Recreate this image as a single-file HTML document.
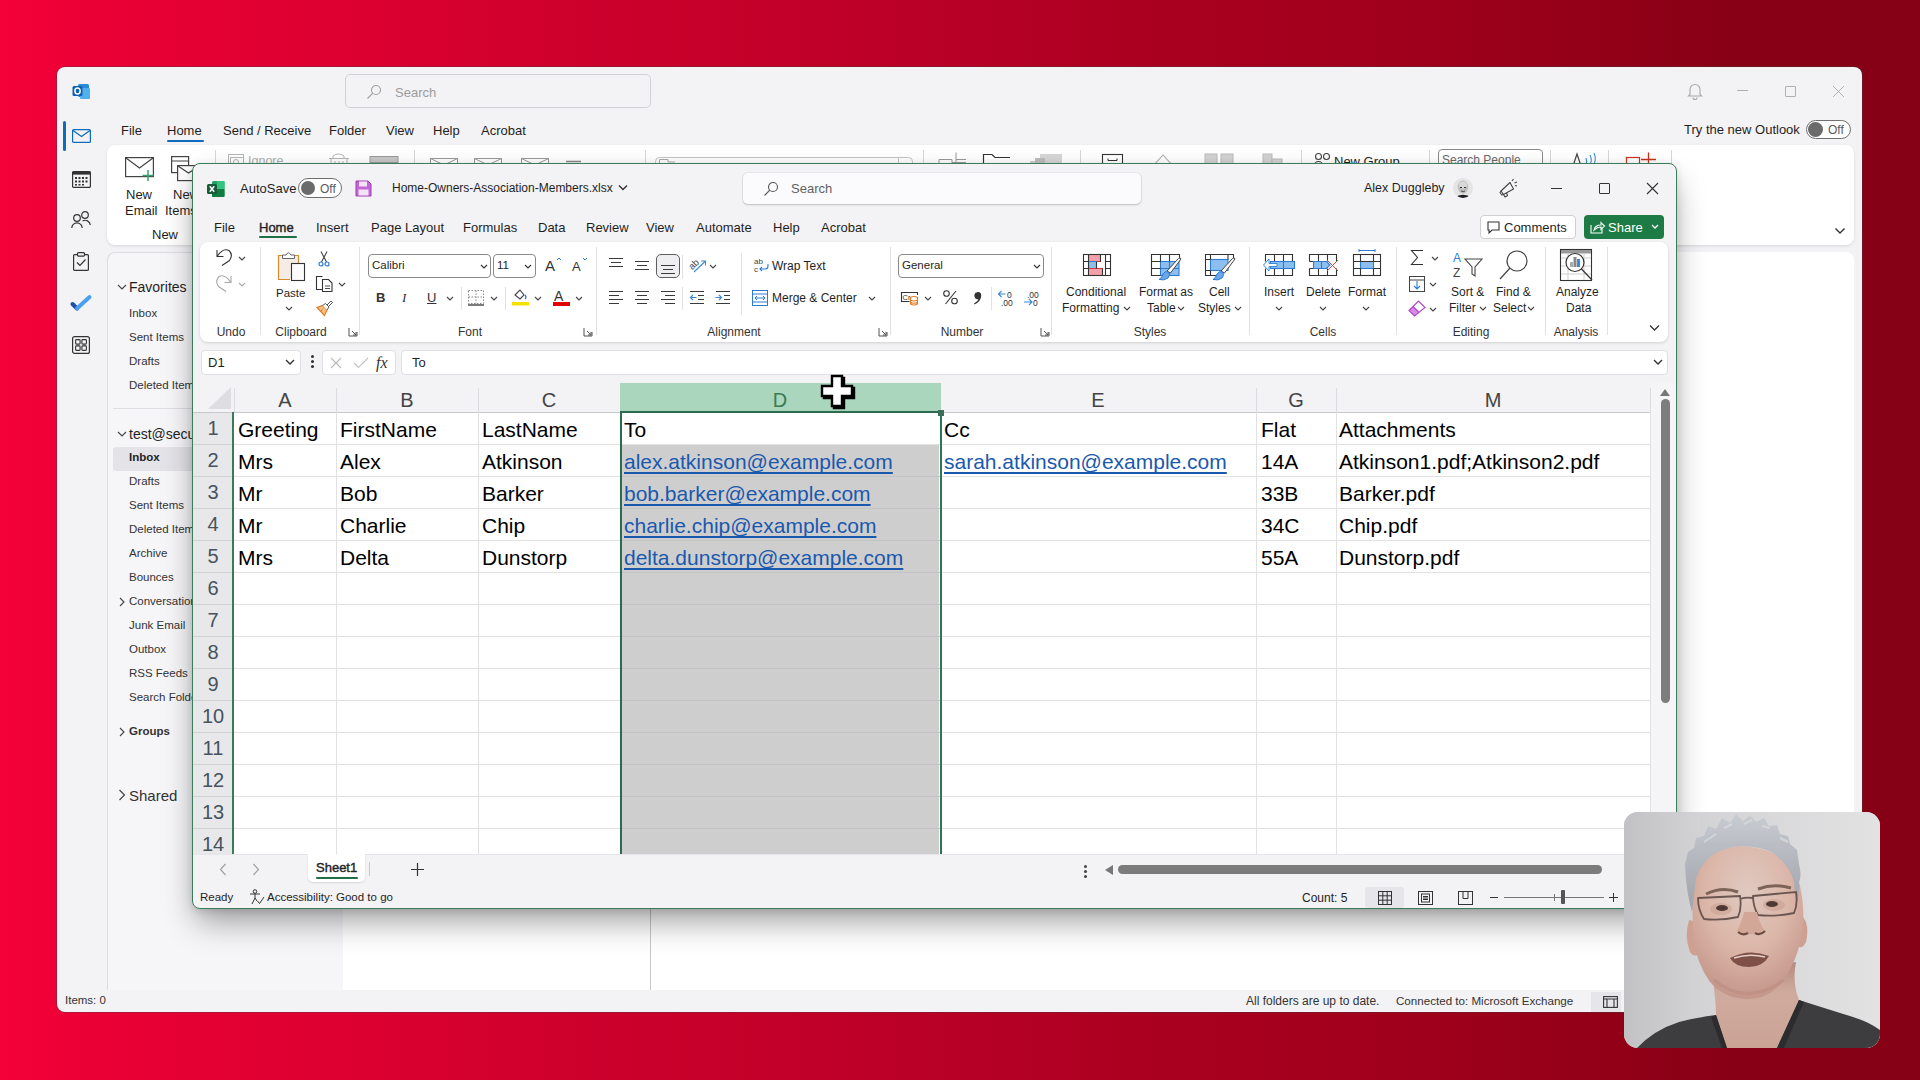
<!DOCTYPE html>
<html><head><meta charset="utf-8">
<style>
*{margin:0;padding:0;box-sizing:border-box}
html,body{width:1920px;height:1080px;overflow:hidden}
body{position:relative;font-family:"Liberation Sans",sans-serif;color:#1f1f1f;
background:linear-gradient(90deg,#f5003a 0%,#ea0035 5%,#dc0030 18.5%,#cc002c 31%,#c20029 41%,#b80027 49.5%,#a9001f 61%,#a0001b 73.5%,#960018 81%,#880016 90%,#860016 100%)}
.a{position:absolute}
.t{position:absolute;white-space:nowrap;line-height:1}
svg{position:absolute;overflow:visible}
/* outlook */
#ol{left:57px;top:67px;width:1805px;height:945px;background:#f3f2f5;border-radius:8px;overflow:hidden;box-shadow:0 0 0 1px rgba(60,60,60,.35)}
.f12{font-size:12px}
.f13{font-size:13px}
/* excel */
#xl{left:192px;top:163px;width:1485px;height:746px;background:#f3f2f5;border:1px solid #3a7d5c;border-radius:8px;overflow:hidden;box-shadow:0 16px 32px -4px rgba(0,0,0,.38),0 2px 8px rgba(0,0,0,.12)}
.cell{position:absolute;font-size:21px;line-height:1;white-space:nowrap;color:#000}
.lnk{color:#1a59ad;text-decoration:underline;text-decoration-thickness:2px;text-underline-offset:3px;text-decoration-skip-ink:none}
.rh{position:absolute;left:0;width:41px;text-align:center;font-size:20px;line-height:1;color:#4a5a66}
.ch{position:absolute;top:0;font-size:20px;line-height:1;color:#444}
</style></head><body>

<!-- ================= OUTLOOK ================= -->
<div id="ol" class="a">
<!-- title bar -->
<svg style="left:15px;top:15px" width="18" height="18" viewBox="0 0 18 18">
 <rect x="6" y="2" width="11" height="13" rx="1.5" fill="#2a8ad4"/>
 <rect x="8" y="6" width="10" height="11" rx="1" fill="#50b0ec"/>
 <rect x="0.5" y="4" width="10" height="10" rx="1.5" fill="#0f5fb5"/>
 <ellipse cx="5.5" cy="9" rx="2.6" ry="3" fill="none" stroke="#fff" stroke-width="1.5"/>
</svg>
<div class="a" style="left:288px;top:7px;width:306px;height:34px;background:#f3f2f5;border:1px solid #d2d1d6;border-radius:5px"></div>
<svg style="left:309px;top:17px" width="16" height="16" viewBox="0 0 16 16"><circle cx="10" cy="6" r="4.5" fill="none" stroke="#a0a0a0" stroke-width="1.1"/><path d="M6.8 9.2 L1.5 14.5" stroke="#a0a0a0" stroke-width="1.1"/></svg>
<div class="t f13" style="left:338px;top:19px;color:#9c9c9c">Search</div>
<svg style="left:1630px;top:15px" width="16" height="18" viewBox="0 0 16 18"><path d="M3 12.5 V7.5 a5 5 0 0 1 10 0 V12.5 L14.5 14 H1.5 Z" fill="none" stroke="#a8a8a8" stroke-width="1.1"/><path d="M6 15.5 a2 2 0 0 0 4 0" fill="none" stroke="#a8a8a8" stroke-width="1.1"/></svg>
<div class="a" style="left:1680px;top:23px;width:11px;height:1px;background:#b0b0b0"></div>
<div class="a" style="left:1728px;top:19px;width:11px;height:11px;border:1px solid #b0b0b0;border-radius:1px"></div>
<svg style="left:1776px;top:19px" width="11" height="11" viewBox="0 0 11 11"><path d="M0 0 L11 11 M11 0 L0 11" stroke="#b0b0b0" stroke-width="1"/></svg>
<!-- tabs -->
<div class="t f13" style="left:64px;top:57px">File</div>
<div class="t f13" style="left:110px;top:57px">Home</div>
<div class="a" style="left:110px;top:73px;width:37px;height:2px;background:#0f6cbd;border-radius:1px"></div>
<div class="t f13" style="left:166px;top:57px">Send / Receive</div>
<div class="t f13" style="left:272px;top:57px">Folder</div>
<div class="t f13" style="left:329px;top:57px">View</div>
<div class="t f13" style="left:376px;top:57px">Help</div>
<div class="t f13" style="left:424px;top:57px">Acrobat</div>
<div class="t f13" style="left:1627px;top:56px">Try the new Outlook</div>
<div class="a" style="left:1749px;top:53px;width:45px;height:19px;border:1px solid #707070;border-radius:10px;background:#fff"></div>
<div class="a" style="left:1751px;top:55px;width:15px;height:15px;border-radius:50%;background:#6b6b6b"></div>
<div class="t f12" style="left:1771px;top:57px;color:#5a5a5a">Off</div>
<!-- rail -->
<div class="a" style="left:6px;top:54px;width:3px;height:30px;background:#0f6cbd;border-radius:2px"></div>
<svg style="left:15px;top:62px" width="19" height="14" viewBox="0 0 19 14"><rect x="0.6" y="0.6" width="17.8" height="12.8" rx="1" fill="none" stroke="#0f6cbd" stroke-width="1.2"/><path d="M1 1.5 L9.5 7.5 L18 1.5" fill="none" stroke="#0f6cbd" stroke-width="1.2"/></svg>
<svg style="left:15px;top:103px" width="19" height="18" viewBox="0 0 19 18"><rect x="0.6" y="1.6" width="17.8" height="15.8" rx="1" fill="none" stroke="#333" stroke-width="1.2"/><rect x="0.6" y="1.6" width="17.8" height="3" fill="#333"/><g fill="#333"><rect x="3" y="7" width="2" height="2"/><rect x="6.5" y="7" width="2" height="2"/><rect x="10" y="7" width="2" height="2"/><rect x="13.5" y="7" width="2" height="2"/><rect x="3" y="10.5" width="2" height="2"/><rect x="6.5" y="10.5" width="2" height="2"/><rect x="10" y="10.5" width="2" height="2"/><rect x="13.5" y="10.5" width="2" height="2"/><rect x="3" y="14" width="2" height="1.5"/><rect x="6.5" y="14" width="2" height="1.5"/><rect x="10" y="14" width="2" height="1.5"/></g></svg>
<svg style="left:14px;top:144px" width="20" height="18" viewBox="0 0 20 18"><circle cx="6" cy="7" r="3.3" fill="none" stroke="#333" stroke-width="1.2"/><path d="M0.8 17 a5.2 5.2 0 0 1 10.4 0" fill="none" stroke="#333" stroke-width="1.2"/><circle cx="14" cy="4" r="3.3" fill="none" stroke="#333" stroke-width="1.2"/><path d="M11.5 10 a5.2 5.2 0 0 1 7.8 4" fill="none" stroke="#333" stroke-width="1.2"/></svg>
<svg style="left:16px;top:185px" width="16" height="19" viewBox="0 0 16 19"><rect x="0.6" y="2.6" width="14.8" height="15.8" rx="1" fill="none" stroke="#333" stroke-width="1.2"/><rect x="4.5" y="0.6" width="7" height="3.5" rx="1" fill="#f3f2f5" stroke="#333" stroke-width="1.2"/><path d="M4 10.5 L7 13.5 L12.5 7.5" fill="none" stroke="#333" stroke-width="1.2"/></svg>
<svg style="left:14px;top:228px" width="20" height="16" viewBox="0 0 20 16"><path d="M1.5 9 L6 13.5" stroke="#1f4fa8" stroke-width="4" stroke-linecap="round"/><path d="M6 13.5 L18.5 2" stroke="#4aa0f0" stroke-width="4" stroke-linecap="round"/></svg>
<svg style="left:15px;top:269px" width="18" height="18" viewBox="0 0 18 18"><rect x="0.6" y="0.6" width="16.8" height="16.8" rx="2" fill="none" stroke="#333" stroke-width="1.2"/><rect x="3.6" y="3.6" width="4.5" height="4.5" rx=".8" fill="none" stroke="#333" stroke-width="1.1"/><rect x="9.9" y="3.6" width="4.5" height="4.5" rx=".8" fill="none" stroke="#333" stroke-width="1.1"/><rect x="3.6" y="9.9" width="4.5" height="4.5" rx=".8" fill="none" stroke="#333" stroke-width="1.1"/><rect x="9.9" y="9.9" width="4.5" height="4.5" rx=".8" fill="none" stroke="#333" stroke-width="1.1"/></svg>
<div class="a" style="left:50px;top:185px;width:260px;height:738px;background:#f6f5f8;border-left:1px solid #dcdbe0;border-top:1px solid #dcdbe0;border-radius:8px 0 0 0"></div>
<!-- ribbon card -->
<div class="a" style="left:50px;top:78px;width:1747px;height:100px;background:#fff;border-radius:8px;box-shadow:0 1px 3px rgba(0,0,0,.12)"></div>
<svg style="left:68px;top:90px" width="32" height="24" viewBox="0 0 32 24"><rect x="0.6" y="0.6" width="27.8" height="19" fill="none" stroke="#444" stroke-width="1.2"/><path d="M1 1 L14.5 11 L28 1" fill="none" stroke="#444" stroke-width="1.2"/><path d="M23 13 V24 M17.5 18.5 H28.5" stroke="#3aa272" stroke-width="1.5"/></svg>
<div class="t f13" style="left:69px;top:121px">New</div>
<div class="t f13" style="left:68px;top:137px">Email</div>
<div class="t f13" style="left:95px;top:161px">New</div>
<svg style="left:114px;top:86px" width="30" height="30" viewBox="0 0 30 30"><rect x="0.6" y="3.6" width="17" height="16" fill="none" stroke="#444" stroke-width="1.2"/><path d="M1 8 H17.5" stroke="#444" stroke-width="1.2"/><rect x="6.6" y="12.6" width="22" height="15" fill="#fff" stroke="#444" stroke-width="1.2"/><path d="M7 13 L17.5 20 L28.5 13" fill="none" stroke="#444" stroke-width="1.2"/></svg>
<div class="t f13" style="left:116px;top:121px">New</div>
<div class="t f13" style="left:108px;top:137px">Items</div>
<!-- partial ribbon icons above excel -->
<svg style="left:0;top:78px" width="1750" height="20" viewBox="57 145 1750 20">
 <g stroke="#d6d6d6" stroke-width="1"><path d="M215.5 150 V165 M414.5 150 V165 M645.5 150 V165 M923.5 150 V165 M1080.5 150 V165 M1301.5 150 V165 M1429.5 150 V165 M1550.5 150 V165 M1608.5 150 V165 M1671.5 150 V165"/></g>
 <g fill="none" stroke="#b5b5b5" stroke-width="1">
  <rect x="228.5" y="154.5" width="15" height="12"/><rect x="230.5" y="157.5" width="13" height="9"/><circle cx="236" cy="162" r="2.5"/>
  <path d="M329 158.5 H349 M333 158.5 V156 Q338.5 152 344 156 V158.5 M331 159 V166 M347 159 V166 M335 161 V166 M339 161 V166 M343 161 V166"/>
  <rect x="370" y="156.5" width="28" height="6" fill="#c8c8c8" stroke="#9a9a9a"/>
  <rect x="430.5" y="158.5" width="27" height="9" stroke="#9a9a9a"/><path d="M430.5 158.5 L444 165 L457.5 158.5" stroke="#9a9a9a"/>
  <rect x="474.5" y="158.5" width="27" height="9" stroke="#9a9a9a"/><path d="M474.5 158.5 L488 165 L501.5 158.5" stroke="#9a9a9a"/>
  <rect x="521.5" y="158.5" width="27" height="9" stroke="#9a9a9a"/><path d="M521.5 158.5 L535 165 L548.5 158.5" stroke="#9a9a9a"/>
  <path d="M566 161.5 H581" stroke="#888" stroke-width="1.5"/>
  <rect x="655.5" y="157.5" width="257" height="12" rx="4" stroke="#c4c4c4"/>
  <path d="M659.5 166 V159.5 H668 V162 H675" stroke="#aaa"/><path d="M898.5 158 V166" stroke="#c4c4c4"/>
  <path d="M939 166 V159.5 H952 V162.5 H966 M952 162.5 V166 M956 152.5 V166 M956 159.5 H966" stroke="#9a9a9a"/>
  <path d="M983.5 166 V154.5 H992 L995 157.5 H1010" stroke="#333" stroke-width="1.2"/>
 </g>
 <rect x="1030" y="161" width="14" height="6" fill="#d0d0d0"/><rect x="1040" y="154" width="22" height="12" fill="#d6d6d6"/><rect x="1035" y="158" width="10" height="6" fill="#bdbdbd"/>
 <rect x="1102.5" y="154.5" width="20" height="12" fill="none" stroke="#333" stroke-width="1.1"/><path d="M1108 158.5 V160.5 H1117 V158.5" fill="none" stroke="#333"/>
 <path d="M1153 166 L1163 155 L1173 166" fill="none" stroke="#aaa" stroke-width="1.1"/>
 <rect x="1205" y="154" width="12" height="12" fill="#d2d2d2" stroke="#bbb"/><rect x="1221" y="154" width="12" height="12" fill="#d2d2d2" stroke="#bbb"/>
 <rect x="1263" y="154" width="9" height="12" fill="#d2d2d2" stroke="#bbb"/><rect x="1272" y="159" width="10" height="7" fill="#d2d2d2" stroke="#bbb"/>
 <g fill="none" stroke="#444" stroke-width="1.1"><circle cx="1318.5" cy="156.5" r="3"/><circle cx="1326.5" cy="156.5" r="3"/><path d="M1314 166 a4.5 4.5 0 0 1 9 0 M1322 166 a4.5 4.5 0 0 1 8 0"/></g>
 <rect x="1438.5" y="149.5" width="104" height="20" rx="3.5" fill="#fff" stroke="#8a8a8a"/>
 <path d="M1573 166 L1577 154 L1581 166" fill="none" stroke="#444" stroke-width="1.2"/>
 <path d="M1585 166 Q1588 162 1586 158 M1589 166 Q1593 161 1590 155 M1593 166 Q1597 160 1594 153" fill="none" stroke="#2b7cd3" stroke-width="1"/>
 <rect x="1626.5" y="157.5" width="13" height="10" fill="none" stroke="#c8321e" stroke-width="1.2"/>
 <path d="M1648.5 152.5 V166 M1641 159.5 H1656" stroke="#c8321e" stroke-width="1.3"/>
</svg>
<div class="t" style="left:191px;top:88px;font-size:12.5px;color:#b0b0b0">Ignore</div>
<div class="t" style="left:1277px;top:88px;font-size:13px">New Group</div>
<div class="t" style="left:1385px;top:87px;font-size:12px;color:#6b6b6b">Search People</div>
<svg style="left:1777px;top:160px" width="12" height="8" viewBox="0 0 12 8"><path d="M1.5 1.5 L6 6 L10.5 1.5" fill="none" stroke="#333" stroke-width="1.4"/></svg>
<!-- folder pane -->
<svg style="left:60px;top:215px" width="10" height="10" viewBox="0 0 10 10"><path d="M1 3 L5 7 L9 3" fill="none" stroke="#444" stroke-width="1.1"/></svg>
<div class="t" style="left:72px;top:213px;font-size:14px">Favorites</div>
<div class="t" style="left:72px;top:241px;font-size:11.5px;color:#333">Inbox</div>
<div class="t" style="left:72px;top:265px;font-size:11.5px;color:#333">Sent Items</div>
<div class="t" style="left:72px;top:289px;font-size:11.5px;color:#333">Drafts</div>
<div class="t" style="left:72px;top:313px;font-size:11.5px;color:#333">Deleted Items</div>
<div class="a" style="left:56px;top:341px;width:100px;height:1px;background:#dedde2"></div>
<svg style="left:60px;top:362px" width="10" height="10" viewBox="0 0 10 10"><path d="M1 3 L5 7 L9 3" fill="none" stroke="#444" stroke-width="1.1"/></svg>
<div class="t" style="left:72px;top:360px;font-size:14px">test@secure.com</div>
<div class="a" style="left:56px;top:380px;width:100px;height:24px;background:#e4e3e8;border-radius:3px"></div>
<div class="t" style="left:72px;top:385px;font-size:11.5px;font-weight:bold">Inbox</div>
<div class="t" style="left:72px;top:409px;font-size:11.5px;color:#333">Drafts</div>
<div class="t" style="left:72px;top:433px;font-size:11.5px;color:#333">Sent Items</div>
<div class="t" style="left:72px;top:457px;font-size:11.5px;color:#333">Deleted Items</div>
<div class="t" style="left:72px;top:481px;font-size:11.5px;color:#333">Archive</div>
<div class="t" style="left:72px;top:505px;font-size:11.5px;color:#333">Bounces</div>
<svg style="left:61px;top:530px" width="8" height="10" viewBox="0 0 8 10"><path d="M2 1 L6 5 L2 9" fill="none" stroke="#444" stroke-width="1.1"/></svg>
<div class="t" style="left:72px;top:529px;font-size:11.5px;color:#333">Conversation History</div>
<div class="t" style="left:72px;top:553px;font-size:11.5px;color:#333">Junk Email</div>
<div class="t" style="left:72px;top:577px;font-size:11.5px;color:#333">Outbox</div>
<div class="t" style="left:72px;top:601px;font-size:11.5px;color:#333">RSS Feeds</div>
<div class="t" style="left:72px;top:625px;font-size:11.5px;color:#333">Search Folders</div>
<svg style="left:61px;top:660px" width="8" height="10" viewBox="0 0 8 10"><path d="M2 1 L6 5 L2 9" fill="none" stroke="#444" stroke-width="1.1"/></svg>
<div class="t" style="left:72px;top:659px;font-size:11.5px;font-weight:bold;color:#333">Groups</div>
<svg style="left:61px;top:722px" width="8" height="12" viewBox="0 0 8 12"><path d="M1.5 1 L6.5 6 L1.5 11" fill="none" stroke="#444" stroke-width="1.2"/></svg>
<div class="t" style="left:72px;top:721px;font-size:15px;color:#333">Shared</div>
<!-- message list & reading pane -->
<div class="a" style="left:286px;top:185px;width:307px;height:738px;background:#fff"></div>
<div class="a" style="left:593px;top:185px;width:1px;height:738px;background:#c8c8c8"></div>
<div class="a" style="left:594px;top:185px;width:1203px;height:738px;background:#fff;border-radius:0 8px 0 0"></div>
<!-- status bar -->
<div class="t" style="left:8px;top:928px;font-size:11.5px;color:#333">Items: 0</div>
<div class="t f12" style="left:1189px;top:928px;color:#333">All folders are up to date.</div>
<div class="t" style="left:1339px;top:928px;font-size:11.6px;color:#333">Connected to: Microsoft Exchange</div>
<div class="a" style="left:1534px;top:925px;width:30px;height:20px;background:#e6e5ea"></div>
<svg style="left:1546px;top:929px" width="15" height="12" viewBox="0 0 15 12"><rect x="0.6" y="0.6" width="13.8" height="10.8" fill="none" stroke="#333" stroke-width="1.1"/><path d="M0.6 3 H14.4 M4 3 V11.4 M11 3 V11.4" stroke="#333" stroke-width="1.1"/></svg>
</div>

<!-- ================= EXCEL ================= -->
<div id="xl" class="a">
<!-- title -->
<svg style="left:14px;top:16px" width="18" height="18" viewBox="0 0 18 18">
 <rect x="5" y="1" width="12.5" height="16" rx="1.5" fill="#21a366"/>
 <rect x="5" y="9" width="12.5" height="8" rx="1" fill="#107c41"/>
 <rect x="10" y="1" width="7.5" height="8" fill="#33c481"/>
 <rect x="0" y="4" width="10" height="10" rx="1.5" fill="#185c37"/>
 <path d="M2.8 6.2 L7.2 11.8 M7.2 6.2 L2.8 11.8" stroke="#fff" stroke-width="1.5"/>
</svg>
<div class="t f13" style="left:47px;top:18px">AutoSave</div>
<div class="a" style="left:105px;top:14px;width:44px;height:20px;border:1px solid #6f6f6f;border-radius:10px;background:#fff"></div>
<div class="a" style="left:108px;top:17px;width:14px;height:14px;border-radius:50%;background:#6b6b6b"></div>
<div class="t f12" style="left:127px;top:19px;color:#5a5a5a">Off</div>
<svg style="left:162px;top:16px" width="17" height="17" viewBox="0 0 17 17"><path d="M1 1 H13 L16 4 V16 H1 Z" fill="#c566d6" stroke="#9b3fb0" stroke-width="1"/><rect x="4" y="1.5" width="8" height="5" fill="#f3e3f6"/><rect x="3.5" y="9.5" width="10" height="6" fill="#f3e3f6"/></svg>
<div class="t" style="left:199px;top:18px;font-size:12px">Home-Owners-Association-Members.xlsx</div>
<svg style="left:425px;top:20px" width="10" height="8" viewBox="0 0 10 8"><path d="M1 1.5 L5 5.5 L9 1.5" fill="none" stroke="#333" stroke-width="1.4"/></svg>
<div class="a" style="left:550px;top:9px;width:398px;height:31px;background:#fbfbfd;border-radius:5px;box-shadow:0 1px 2px rgba(0,0,0,.18),0 0 0 1px #e8e8ec"></div>
<svg style="left:570px;top:17px" width="16" height="16" viewBox="0 0 16 16"><circle cx="10" cy="6" r="4.5" fill="none" stroke="#555" stroke-width="1.1"/><path d="M6.8 9.2 L1.5 14.5" stroke="#555" stroke-width="1.1"/></svg>
<div class="t f13" style="left:598px;top:18px;color:#616161">Search</div>
<div class="t" style="left:1171px;top:18px;font-size:12.5px">Alex Duggleby</div>
<svg style="left:1260px;top:14px" width="20" height="20" viewBox="0 0 20 20"><defs><clipPath id="av"><circle cx="10" cy="10" r="10"/></clipPath></defs><g clip-path="url(#av)"><rect width="20" height="20" fill="#e4e4e4"/><ellipse cx="10" cy="9" rx="5.2" ry="6.5" fill="#bdbdbd"/><ellipse cx="10" cy="7" rx="4" ry="3.5" fill="#d9d9d9"/><path d="M7 9.5 H9 M11 9.5 H13" stroke="#333" stroke-width="1"/><path d="M8 13 Q10 14.5 12 13" fill="none" stroke="#555" stroke-width="1"/><path d="M1 20 Q10 13.5 19 20 Z" fill="#1e1e1e"/></g></svg>
<svg style="left:1305px;top:14px" width="20" height="20" viewBox="0 0 20 20"><g fill="none" stroke="#444" stroke-width="1.1" stroke-linejoin="round"><path d="M3 13 L12 4.5 L15.5 11 L5.5 16.5 Z"/><path d="M5.5 16.5 L7 19 L9.5 17.5 L8.5 15"/><path d="M3 13 L2 14.5 L3.8 17 L5.5 16.5"/><path d="M14 3 L15.5 1 M16.5 5 L19 4 M17 7.5 L19 8"/></g></svg>
<div class="a" style="left:1358px;top:24px;width:11px;height:1px;background:#333"></div>
<div class="a" style="left:1406px;top:19px;width:11px;height:11px;border:1px solid #333;border-radius:1px"></div>
<svg style="left:1454px;top:19px" width="11" height="11" viewBox="0 0 11 11"><path d="M0 0 L11 11 M11 0 L0 11" stroke="#333" stroke-width="1.1"/></svg>
<!-- tabs -->
<div class="t f13" style="left:21px;top:57px">File</div>
<div class="t f13" style="left:66px;top:57px;color:#242424;-webkit-text-stroke:0.4px #242424">Home</div>
<div class="a" style="left:66px;top:72px;width:38px;height:2px;background:#1e7145;border-radius:1px"></div>
<div class="t f13" style="left:123px;top:57px">Insert</div>
<div class="t f13" style="left:178px;top:57px">Page Layout</div>
<div class="t f13" style="left:270px;top:57px">Formulas</div>
<div class="t f13" style="left:345px;top:57px">Data</div>
<div class="t f13" style="left:393px;top:57px">Review</div>
<div class="t f13" style="left:453px;top:57px">View</div>
<div class="t f13" style="left:503px;top:57px">Automate</div>
<div class="t f13" style="left:580px;top:57px">Help</div>
<div class="t f13" style="left:628px;top:57px">Acrobat</div>
<div class="a" style="left:1287px;top:51px;width:96px;height:24px;background:#fff;border:1px solid #cfcfcf;border-radius:4px"></div>
<svg style="left:1294px;top:57px" width="13" height="13" viewBox="0 0 13 13"><path d="M1 1 H12 V9 H5 L2 12 V9 H1 Z" fill="none" stroke="#333" stroke-width="1.1"/></svg>
<div class="t f13" style="left:1311px;top:57px">Comments</div>
<div class="a" style="left:1391px;top:51px;width:80px;height:24px;background:#1d7c45;border-radius:4px"></div>
<svg style="left:1397px;top:56px" width="15" height="14" viewBox="0 0 15 14"><path d="M1 5 V13 H12 V9" fill="none" stroke="#fff" stroke-width="1.1"/><path d="M4 10 Q5 5 11 5 V2.5 L14.5 6 L11 9.5 V7 Q7 7 4 10 Z" fill="none" stroke="#fff" stroke-width="1.1"/></svg>
<div class="t f13" style="left:1415px;top:57px;color:#fff">Share</div>
<svg style="left:1458px;top:60px" width="8" height="6" viewBox="0 0 8 6"><path d="M1 1 L4 4 L7 1" fill="none" stroke="#fff" stroke-width="1.3"/></svg>
<!-- ribbon card -->
<div class="a" style="left:7px;top:78px;width:1468px;height:100px;background:#fff;border-radius:8px;box-shadow:0 1px 3px rgba(0,0,0,.15)"></div>
<div class="a" style="left:67px;top:83px;width:1px;height:88px;background:#e1e1e1"></div>
<div class="a" style="left:166px;top:83px;width:1px;height:88px;background:#e1e1e1"></div>
<div class="a" style="left:403px;top:83px;width:1px;height:88px;background:#e1e1e1"></div>
<div class="a" style="left:697px;top:83px;width:1px;height:88px;background:#e1e1e1"></div>
<div class="a" style="left:858px;top:83px;width:1px;height:88px;background:#e1e1e1"></div>
<div class="a" style="left:1056px;top:83px;width:1px;height:88px;background:#e1e1e1"></div>
<div class="a" style="left:1203px;top:83px;width:1px;height:88px;background:#e1e1e1"></div>
<div class="a" style="left:1352px;top:83px;width:1px;height:88px;background:#e1e1e1"></div>
<div class="a" style="left:1414px;top:83px;width:1px;height:88px;background:#e1e1e1"></div>
<div class="t" style="left:-22px;width:120px;top:162px;font-size:12px;text-align:center;color:#333">Undo</div>
<div class="t" style="left:48px;width:120px;top:162px;font-size:12px;text-align:center;color:#333">Clipboard</div>
<div class="t" style="left:217px;width:120px;top:162px;font-size:12px;text-align:center;color:#333">Font</div>
<div class="t" style="left:481px;width:120px;top:162px;font-size:12px;text-align:center;color:#333">Alignment</div>
<div class="t" style="left:709px;width:120px;top:162px;font-size:12px;text-align:center;color:#333">Number</div>
<div class="t" style="left:897px;width:120px;top:162px;font-size:12px;text-align:center;color:#333">Styles</div>
<div class="t" style="left:1070px;width:120px;top:162px;font-size:12px;text-align:center;color:#333">Cells</div>
<div class="t" style="left:1218px;width:120px;top:162px;font-size:12px;text-align:center;color:#333">Editing</div>
<div class="t" style="left:1323px;width:120px;top:162px;font-size:12px;text-align:center;color:#333">Analysis</div>
<svg style="left:155px;top:163px" width="10" height="10" viewBox="0 0 10 10"><path d="M1 1 V9 H9 V5 M4 4 L8 8 M8 5 V8 H5" fill="none" stroke="#555" stroke-width="1"/></svg>
<svg style="left:390px;top:163px" width="10" height="10" viewBox="0 0 10 10"><path d="M1 1 V9 H9 V5 M4 4 L8 8 M8 5 V8 H5" fill="none" stroke="#555" stroke-width="1"/></svg>
<svg style="left:685px;top:163px" width="10" height="10" viewBox="0 0 10 10"><path d="M1 1 V9 H9 V5 M4 4 L8 8 M8 5 V8 H5" fill="none" stroke="#555" stroke-width="1"/></svg>
<svg style="left:847px;top:163px" width="10" height="10" viewBox="0 0 10 10"><path d="M1 1 V9 H9 V5 M4 4 L8 8 M8 5 V8 H5" fill="none" stroke="#555" stroke-width="1"/></svg>
<svg style="left:22px;top:85px" width="18" height="18" viewBox="215 249 18 18"><path d="M217 250 V256.5 H223.5 M217.5 256 Q223 247.5 229 250.5 Q233.5 255 229.5 260.5 L222 265.5" fill="none" stroke="#333" stroke-width="1.1"/></svg>
<svg style="left:45px;top:92px" width="8" height="5" viewBox="0 0 8 5"><path d="M1 1 L4 4 L7 1" fill="none" stroke="#444" stroke-width="1.1"/></svg>
<svg style="left:22px;top:111px" width="18" height="18" viewBox="215 275 18 18"><path d="M231 276 V282.5 H224.5 M230.5 282 Q225 273.5 219 276.5 Q214.5 281 218.5 286.5 L226 291.5" fill="none" stroke="#a8a8a8" stroke-width="1.1"/></svg>
<svg style="left:45px;top:118px" width="8" height="5" viewBox="0 0 8 5"><path d="M1 1 L4 4 L7 1" fill="none" stroke="#aaa" stroke-width="1.1"/></svg>
<svg style="left:84px;top:86px" width="30" height="34" viewBox="277 250 30 34"><path d="M290 279.5 H278.5 V255.5 H298.5 V263" fill="#f6ece6" stroke="#d98a2b" stroke-width="1.2"/><path d="M282.5 258.5 V255 H286 Q288.5 250.5 291 255 H294.5 V258.5 Z" fill="#fff" stroke="#666" stroke-width="1"/><rect x="291.5" y="263.5" width="13" height="17" fill="#fbfbfd" stroke="#333" stroke-width="1.1"/></svg>
<div class="t" style="left:83px;top:124px;font-size:11.5px">Paste</div>
<svg style="left:92px;top:142px" width="8" height="5" viewBox="0 0 8 5"><path d="M1 1 L4 4 L7 1" fill="none" stroke="#444" stroke-width="1.1"/></svg>
<svg style="left:125px;top:87px" width="12" height="16" viewBox="0 0 12 16"><path d="M3 0.5 L8.5 11 M9 0.5 L3.5 11" stroke="#444" stroke-width="1.1"/><circle cx="3" cy="13" r="2" fill="none" stroke="#2b7cd3" stroke-width="1.2"/><circle cx="9" cy="13" r="2" fill="none" stroke="#2b7cd3" stroke-width="1.2"/></svg>
<svg style="left:122px;top:110px" width="20" height="20" viewBox="315 274 20 20"><path d="M322.5 276.5 H316.5 V289.5 H322" fill="none" stroke="#333" stroke-width="1.1"/><path d="M322.5 279.5 H328.5 L332 283 V291.5 H322.5 Z" fill="#fff" stroke="#333" stroke-width="1.1"/><path d="M325 286 H330 M325 288.5 H330" stroke="#333" stroke-width="0.9"/></svg>
<svg style="left:145px;top:118px" width="8" height="5" viewBox="0 0 8 5"><path d="M1 1 L4 4 L7 1" fill="none" stroke="#444" stroke-width="1.1"/></svg>
<svg style="left:122px;top:136px" width="18" height="18" viewBox="315 300 18 18"><path d="M317 307.5 L324.5 315.5 L327 310 L322.5 305.5 Z" fill="#f7c28a" stroke="#e07a20" stroke-width="1.1"/><path d="M320 312 L323 308.5" stroke="#e07a20" stroke-width="1"/><path d="M322.5 305.5 L325.5 303.5 L329 307 L327 310 M327 305 L331 301 L332.5 302.5 L328.5 306.5" fill="#fff" stroke="#555" stroke-width="1"/></svg>
<div class="a" style="left:175px;top:90px;width:123px;height:24px;border:1px solid #8a8a8a;border-radius:4px;background:#fff"></div>
<div class="t" style="left:179px;top:96px;font-size:11.5px">Calibri</div>
<svg style="left:287px;top:100px" width="8" height="5" viewBox="0 0 8 5"><path d="M1 1 L4 4 L7 1" fill="none" stroke="#333" stroke-width="1.1"/></svg>
<div class="a" style="left:300px;top:90px;width:43px;height:24px;border:1px solid #8a8a8a;border-radius:4px;background:#fff"></div>
<div class="t" style="left:304px;top:96px;font-size:11.5px">11</div>
<svg style="left:331px;top:100px" width="8" height="5" viewBox="0 0 8 5"><path d="M1 1 L4 4 L7 1" fill="none" stroke="#333" stroke-width="1.1"/></svg>
<div class="t" style="left:352px;top:94px;font-size:15px;color:#333">A</div><svg style="left:363px;top:93px" width="6" height="4" viewBox="0 0 6 4"><path d="M1 3 L3 1 L5 3" fill="none" stroke="#2b7cd3" stroke-width="1"/></svg>
<div class="t" style="left:379px;top:96px;font-size:13px;color:#333">A</div><svg style="left:389px;top:93px" width="6" height="4" viewBox="0 0 6 4"><path d="M1 1 L3 3 L5 1" fill="none" stroke="#2b7cd3" stroke-width="1"/></svg>
<div class="t" style="left:183px;top:127px;font-size:13px;font-weight:bold;color:#333">B</div>
<div class="t" style="left:209px;top:127px;font-size:13px;font-style:italic;color:#333;font-family:'Liberation Serif'">I</div>
<div class="t" style="left:234px;top:127px;font-size:13px;text-decoration:underline;color:#333">U</div>
<svg style="left:253px;top:132px" width="8" height="5" viewBox="0 0 8 5"><path d="M1 1 L4 4 L7 1" fill="none" stroke="#444" stroke-width="1.1"/></svg>
<div class="a" style="left:268px;top:123px;width:1px;height:23px;background:#e1e1e1"></div>
<svg style="left:275px;top:126px" width="16" height="16" viewBox="0 0 16 16"><rect x=".5" y=".5" width="15" height="13" fill="none" stroke="#888" stroke-width="1" stroke-dasharray="1.5 1.5"/><path d="M8 .5 V13.5 M.5 7 H15.5" stroke="#888" stroke-width="1" stroke-dasharray="1.5 1.5"/><path d="M0 15 H16" stroke="#333" stroke-width="1.3"/></svg>
<svg style="left:297px;top:132px" width="8" height="5" viewBox="0 0 8 5"><path d="M1 1 L4 4 L7 1" fill="none" stroke="#444" stroke-width="1.1"/></svg>
<div class="a" style="left:312px;top:123px;width:1px;height:23px;background:#e1e1e1"></div>
<svg style="left:319px;top:124px" width="17" height="18" viewBox="0 0 17 18"><path d="M3 7 L8 2 L12 7 L8 11 Z" fill="none" stroke="#444" stroke-width="1.1"/><path d="M13 7 Q15 9 13 11" fill="none" stroke="#2b7cd3" stroke-width="1.2"/><rect x="0" y="14" width="17" height="3.5" fill="#f4e200"/></svg>
<svg style="left:341px;top:132px" width="8" height="5" viewBox="0 0 8 5"><path d="M1 1 L4 4 L7 1" fill="none" stroke="#444" stroke-width="1.1"/></svg>
<div class="t" style="left:361px;top:125px;font-size:14px;color:#333">A</div><div class="a" style="left:360px;top:138px;width:17px;height:3.5px;background:#e00000"></div>
<svg style="left:382px;top:132px" width="8" height="5" viewBox="0 0 8 5"><path d="M1 1 L4 4 L7 1" fill="none" stroke="#444" stroke-width="1.1"/></svg>
<div class="a" style="left:416px;top:94px;width:14px;height:1.3px;background:#3a3a3a"></div>
<div class="a" style="left:418px;top:98px;width:10px;height:1.3px;background:#3a3a3a"></div>
<div class="a" style="left:416px;top:102px;width:14px;height:1.3px;background:#3a3a3a"></div>
<div class="a" style="left:442px;top:97px;width:14px;height:1.3px;background:#3a3a3a"></div>
<div class="a" style="left:444px;top:101px;width:10px;height:1.3px;background:#3a3a3a"></div>
<div class="a" style="left:442px;top:105px;width:14px;height:1.3px;background:#3a3a3a"></div>
<div class="a" style="left:463px;top:90px;width:24px;height:24px;border:1px solid #5e5e5e;border-radius:5px;background:#efeef1"></div>
<div class="a" style="left:468px;top:101px;width:14px;height:1.3px;background:#3a3a3a"></div>
<div class="a" style="left:470px;top:105px;width:10px;height:1.3px;background:#3a3a3a"></div>
<div class="a" style="left:468px;top:109px;width:14px;height:1.3px;background:#3a3a3a"></div>
<div class="a" style="left:489px;top:91px;width:1px;height:24px;background:#e1e1e1"></div>
<svg style="left:494px;top:90px" width="22" height="20" viewBox="0 0 22 20"><text x="1" y="14" font-size="9.5" font-family="Liberation Sans" fill="#444" transform="rotate(-45 6 10)">ab</text><path d="M7 18 L18 7.5 M14 7 H18.5 V11.5" fill="none" stroke="#3b8ad8" stroke-width="1.1"/></svg>
<svg style="left:516px;top:100px" width="8" height="5" viewBox="0 0 8 5"><path d="M1 1 L4 4 L7 1" fill="none" stroke="#444" stroke-width="1.1"/></svg>
<div class="a" style="left:548px;top:89px;width:1px;height:62px;background:#e1e1e1"></div>
<svg style="left:560px;top:92px" width="16" height="18" viewBox="0 0 16 18"><text x="1" y="8" font-size="8" font-family="Liberation Sans" fill="#444">ab</text><text x="1" y="16" font-size="8" font-family="Liberation Sans" fill="#444">c</text><path d="M7 13 H12 Q15 13 15 10 V8" fill="none" stroke="#2b7cd3" stroke-width="1.1"/><path d="M9 11 L7 13 L9 15" fill="none" stroke="#2b7cd3" stroke-width="1.1"/></svg>
<div class="t" style="left:579px;top:96px;font-size:12px">Wrap Text</div>
<div class="a" style="left:416px;top:127px;width:14px;height:1.3px;background:#3a3a3a"></div>
<div class="a" style="left:416px;top:131px;width:10px;height:1.3px;background:#3a3a3a"></div>
<div class="a" style="left:416px;top:135px;width:14px;height:1.3px;background:#3a3a3a"></div>
<div class="a" style="left:416px;top:139px;width:10px;height:1.3px;background:#3a3a3a"></div>
<div class="a" style="left:442px;top:127px;width:14px;height:1.3px;background:#3a3a3a"></div>
<div class="a" style="left:444px;top:131px;width:10px;height:1.3px;background:#3a3a3a"></div>
<div class="a" style="left:442px;top:135px;width:14px;height:1.3px;background:#3a3a3a"></div>
<div class="a" style="left:444px;top:139px;width:10px;height:1.3px;background:#3a3a3a"></div>
<div class="a" style="left:468px;top:127px;width:14px;height:1.3px;background:#3a3a3a"></div>
<div class="a" style="left:472px;top:131px;width:10px;height:1.3px;background:#3a3a3a"></div>
<div class="a" style="left:468px;top:135px;width:14px;height:1.3px;background:#3a3a3a"></div>
<div class="a" style="left:472px;top:139px;width:10px;height:1.3px;background:#3a3a3a"></div>
<div class="a" style="left:489px;top:123px;width:1px;height:23px;background:#e1e1e1"></div>
<div class="a" style="left:497px;top:127px;width:14px;height:1.3px;background:#3a3a3a"></div>
<div class="a" style="left:505px;top:131px;width:6px;height:1.3px;background:#3a3a3a"></div>
<div class="a" style="left:505px;top:135px;width:6px;height:1.3px;background:#3a3a3a"></div>
<div class="a" style="left:497px;top:139px;width:14px;height:1.3px;background:#3a3a3a"></div>
<svg style="left:496px;top:130px" width="8" height="7" viewBox="0 0 8 7"><path d="M7.5 3.5 H1.5 M4 1 L1.5 3.5 L4 6" fill="none" stroke="#3b8ad8" stroke-width="1.2"/></svg>
<div class="a" style="left:523px;top:127px;width:14px;height:1.3px;background:#3a3a3a"></div>
<div class="a" style="left:531px;top:131px;width:6px;height:1.3px;background:#3a3a3a"></div>
<div class="a" style="left:531px;top:135px;width:6px;height:1.3px;background:#3a3a3a"></div>
<div class="a" style="left:523px;top:139px;width:14px;height:1.3px;background:#3a3a3a"></div>
<svg style="left:522px;top:130px" width="8" height="7" viewBox="0 0 8 7"><path d="M0.5 3.5 H6.5 M4 1 L6.5 3.5 L4 6" fill="none" stroke="#3b8ad8" stroke-width="1.2"/></svg>
<svg style="left:559px;top:126px" width="16" height="16" viewBox="0 0 16 16"><rect x=".5" y=".5" width="15" height="15" fill="none" stroke="#2b7cd3" stroke-width="1"/><path d="M.5 4 H15.5 M.5 12 H15.5" stroke="#2b7cd3" stroke-width="1"/><path d="M3 8 H13 M5 6 L3 8 L5 10 M11 6 L13 8 L11 10" fill="none" stroke="#2b7cd3" stroke-width="1"/></svg>
<div class="t" style="left:579px;top:128px;font-size:12px">Merge &amp; Center</div>
<svg style="left:675px;top:132px" width="8" height="5" viewBox="0 0 8 5"><path d="M1 1 L4 4 L7 1" fill="none" stroke="#444" stroke-width="1.1"/></svg>
<div class="a" style="left:705px;top:90px;width:146px;height:24px;border:1px solid #8a8a8a;border-radius:4px;background:#fff"></div>
<div class="t" style="left:709px;top:96px;font-size:11.5px">General</div>
<svg style="left:840px;top:100px" width="8" height="5" viewBox="0 0 8 5"><path d="M1 1 L4 4 L7 1" fill="none" stroke="#333" stroke-width="1.1"/></svg>
<svg style="left:708px;top:128px" width="18" height="14" viewBox="0 0 18 14"><path d="M8.5 9.5 H0.5 V0.5 H16.5 V3" fill="none" stroke="#333" stroke-width="1.1"/><text x="1.5" y="8" font-size="7.5" font-family="Liberation Sans" fill="#333">Cr</text><path d="M9.5 5.5 Q13 3.5 16.5 5.5 V12 Q13 14 9.5 12 Z M9.5 8 Q13 10 16.5 8 M9.5 10.2 Q13 12.2 16.5 10.2" fill="#fff" stroke="#e07a20" stroke-width="1.1"/></svg>
<svg style="left:731px;top:132px" width="8" height="5" viewBox="0 0 8 5"><path d="M1 1 L4 4 L7 1" fill="none" stroke="#444" stroke-width="1.1"/></svg>
<svg style="left:750px;top:126px" width="16" height="15" viewBox="0 0 16 15"><circle cx="3.5" cy="3.5" r="2.8" fill="none" stroke="#333" stroke-width="1.1"/><circle cx="11.5" cy="11" r="2.8" fill="none" stroke="#333" stroke-width="1.1"/><path d="M13 1 L2.5 14" stroke="#333" stroke-width="1.1"/></svg>
<svg style="left:780px;top:127px" width="9" height="14" viewBox="0 0 9 14"><path d="M4.5 1 a3.6 3.6 0 1 1 0 7.2 a3.6 3.6 0 0 1 -2.5 -1 Q5.5 8 6.5 5 L8 5.5 Q7.5 11 1.5 13.5 L1 12.5 Q5 10.5 5.6 8" fill="#333"/><circle cx="4.8" cy="4.6" r="3.4" fill="#333"/></svg>
<div class="a" style="left:798px;top:123px;width:1px;height:23px;background:#e1e1e1"></div>
<svg style="left:804px;top:125px" width="18" height="18" viewBox="0 0 18 18"><path d="M8.5 5 H1.5 M4.5 2 L1.5 5 L4.5 8" fill="none" stroke="#3b8ad8" stroke-width="1.1"/><text x="10" y="8.5" font-size="8.5" font-family="Liberation Sans" fill="#333">0</text><text x="4" y="16.5" font-size="8.5" font-family="Liberation Sans" fill="#333">.00</text></svg>
<svg style="left:830px;top:125px" width="18" height="18" viewBox="0 0 18 18"><text x="4" y="8.5" font-size="8.5" font-family="Liberation Sans" fill="#333">.00</text><path d="M1 13 H9 M6 10 L9 13 L6 16" fill="none" stroke="#3b8ad8" stroke-width="1.1"/><text x="10" y="16.5" font-size="8.5" font-family="Liberation Sans" fill="#333">0</text></svg>
<svg style="left:888px;top:88px" width="32" height="26" viewBox="1081 252 32 26">
<rect x="1088.5" y="254.5" width="12" height="7" fill="#f4a0a8" stroke="#d8323c" stroke-width="1"/>
<rect x="1088.5" y="261.5" width="8" height="7" fill="#8dbef0" stroke="#2b7cd3" stroke-width="1"/>
<rect x="1088.5" y="268.5" width="14" height="7" fill="#f4a0a8" stroke="#d8323c" stroke-width="1"/>
<g fill="none" stroke="#333" stroke-width="1.1"><rect x="1083.5" y="254.5" width="27" height="21"/><path d="M1088.5 254.5 V275.5 M1105.5 254.5 V275.5 M1083.5 261.5 H1088.5 M1105.5 261.5 H1110.5 M1083.5 268.5 H1088.5 M1105.5 268.5 H1110.5 M1100.5 254.5 V261.5 M1096.5 261.5 V268.5 M1102.5 268.5 V275.5"/></g>
</svg>
<div class="t" style="left:873px;top:122px;font-size:12px">Conditional</div>
<div class="t" style="left:869px;top:138px;font-size:12px">Formatting</div>
<svg style="left:930px;top:142px" width="8" height="5" viewBox="0 0 8 5"><path d="M1 1 L4 4 L7 1" fill="none" stroke="#444" stroke-width="1.1"/></svg>
<svg style="left:956px;top:88px" width="34" height="30" viewBox="1149 252 34 30">
<rect x="1160.5" y="261.5" width="18.5" height="14" fill="#8dbef0" stroke="#2b7cd3" stroke-width="1.1"/>
<path d="M1169.5 261.5 V275.5 M1160.5 268.5 H1179" stroke="#2b7cd3" stroke-width="1.1"/>
<g fill="none" stroke="#333" stroke-width="1.1"><path d="M1160.5 275.5 H1151.5 V254.5 H1179.5 V261.5 M1151.5 261.5 H1160.5 M1151.5 268.5 H1160.5 M1160.5 254.5 V261.5 M1169.5 254.5 V261.5"/></g>
<path d="M1167 271 L1178.5 258.5 Q1180.5 257 1181 259 L1170.5 273 Z" fill="#fff" stroke="#444" stroke-width="1"/>
<path d="M1159 279.5 Q1162 278 1163 274 Q1165 270.5 1168.5 272 Q1171 274.5 1168 278 Q1164 281 1159 279.5 Z" fill="#6aa8ec" stroke="#2b7cd3" stroke-width="1"/>
</svg>
<div class="t" style="left:946px;top:122px;font-size:12px">Format as</div>
<div class="t" style="left:954px;top:138px;font-size:12px">Table</div>
<svg style="left:984px;top:142px" width="8" height="5" viewBox="0 0 8 5"><path d="M1 1 L4 4 L7 1" fill="none" stroke="#444" stroke-width="1.1"/></svg>
<svg style="left:1010px;top:88px" width="34" height="30" viewBox="1203 252 34 30">
<rect x="1210.5" y="259.5" width="17.5" height="11" fill="#8dbef0" stroke="#2b7cd3" stroke-width="1.1"/>
<g fill="none" stroke="#333" stroke-width="1.1"><path d="M1222 275.5 H1205.5 V254.5 H1233.5 V259.5 M1205.5 259.5 H1210.5 M1205.5 270.5 H1210.5 M1210.5 254.5 V259.5 M1210.5 270.5 V275.5 M1228 254.5 V259.5"/></g>
<path d="M1221 271 L1232.5 258.5 Q1234.5 257 1235 259 L1224.5 273 Z" fill="#fff" stroke="#444" stroke-width="1"/>
<path d="M1213 279.5 Q1216 278 1217 274 Q1219 270.5 1222.5 272 Q1225 274.5 1222 278 Q1218 281 1213 279.5 Z" fill="#6aa8ec" stroke="#2b7cd3" stroke-width="1"/>
</svg>
<div class="t" style="left:1016px;top:122px;font-size:12px">Cell</div>
<div class="t" style="left:1005px;top:138px;font-size:12px">Styles</div>
<svg style="left:1041px;top:142px" width="8" height="5" viewBox="0 0 8 5"><path d="M1 1 L4 4 L7 1" fill="none" stroke="#444" stroke-width="1.1"/></svg>
<svg style="left:1068px;top:86px" width="34" height="28" viewBox="1261 250 34 28">
<g fill="none" stroke="#333" stroke-width="1.1"><path d="M1265.5 261.5 V254.5 H1292.5 V261.5 M1265.5 268.5 V275.5 H1292.5 V268.5 M1274.5 254.5 V261.5 M1283.5 254.5 V261.5 M1274.5 268.5 V275.5 M1283.5 268.5 V275.5"/></g>
<rect x="1270.5" y="261.5" width="24" height="7" fill="#8dbef0" stroke="#2b7cd3" stroke-width="1.1"/><path d="M1283.5 261.5 V268.5" stroke="#2b7cd3" stroke-width="1.1"/>
<path d="M1277 263.5 H1269 V259 L1263.5 265 L1269 271 V266.5 H1277 Z" fill="#fff" stroke="#3b8ad8" stroke-width="1"/>
</svg>
<div class="t" style="left:1071px;top:122px;font-size:12px">Insert</div>
<svg style="left:1082px;top:142px" width="8" height="5" viewBox="0 0 8 5"><path d="M1 1 L4 4 L7 1" fill="none" stroke="#444" stroke-width="1.1"/></svg>
<svg style="left:1114px;top:86px" width="34" height="28" viewBox="1307 250 34 28">
<g fill="none" stroke="#333" stroke-width="1.1"><path d="M1309.5 261.5 V254.5 H1336.5 V261.5 M1309.5 261.5 H1313.5 M1309.5 268.5 H1313.5 M1309.5 268.5 V275.5 H1336.5 V268.5 M1318.5 254.5 V261.5 M1327.5 254.5 V261.5 M1318.5 268.5 V275.5 M1327.5 268.5 V275.5"/></g>
<path d="M1313.5 261.5 H1326.5 L1330 265 L1326.5 268.5 H1313.5 Z" fill="#8dbef0" stroke="#2b7cd3" stroke-width="1.1"/><path d="M1321.5 261.5 V268.5" stroke="#2b7cd3" stroke-width="1.1"/>
<path d="M1327 260 L1338 271 M1338 260 L1327 271" stroke="#e0454a" stroke-width="1"/>
</svg>
<div class="t" style="left:1113px;top:122px;font-size:12px">Delete</div>
<svg style="left:1126px;top:142px" width="8" height="5" viewBox="0 0 8 5"><path d="M1 1 L4 4 L7 1" fill="none" stroke="#444" stroke-width="1.1"/></svg>
<svg style="left:1158px;top:84px" width="30" height="30" viewBox="1351 248 30 30">
<path d="M1359 250.5 H1375 M1359 249 V252 M1375 249 V252" stroke="#2b7cd3" stroke-width="1"/>
<rect x="1360.5" y="261.5" width="13" height="7" fill="#8dbef0" stroke="#2b7cd3" stroke-width="1.1"/>
<g fill="none" stroke="#333" stroke-width="1.1"><rect x="1353.5" y="254.5" width="27" height="21"/><path d="M1360.5 254.5 V261.5 M1373.5 254.5 V261.5 M1360.5 268.5 V275.5 M1373.5 268.5 V275.5 M1353.5 261.5 H1360.5 M1373.5 261.5 H1380.5 M1353.5 268.5 H1360.5 M1373.5 268.5 H1380.5 M1360.5 261.5 H1373.5"/></g>
</svg>
<div class="t" style="left:1155px;top:122px;font-size:12px">Format</div>
<svg style="left:1169px;top:142px" width="8" height="5" viewBox="0 0 8 5"><path d="M1 1 L4 4 L7 1" fill="none" stroke="#444" stroke-width="1.1"/></svg>
<svg style="left:1217px;top:85px" width="14" height="17" viewBox="0 0 14 17"><path d="M13 1.5 H1.5 L7.5 8.5 L1.5 15.5 H13" fill="none" stroke="#333" stroke-width="1.1"/></svg>
<svg style="left:1238px;top:92px" width="8" height="5" viewBox="0 0 8 5"><path d="M1 1 L4 4 L7 1" fill="none" stroke="#444" stroke-width="1.1"/></svg>
<svg style="left:1216px;top:112px" width="16" height="16" viewBox="0 0 16 16"><rect x=".5" y=".5" width="15" height="15" fill="none" stroke="#444" stroke-width="1"/><path d="M.5 4 H15.5" stroke="#444"/><path d="M8 5 V13 M5 10 L8 13 L11 10" fill="none" stroke="#2b7cd3" stroke-width="1.1"/></svg>
<svg style="left:1236px;top:118px" width="8" height="5" viewBox="0 0 8 5"><path d="M1 1 L4 4 L7 1" fill="none" stroke="#444" stroke-width="1.1"/></svg>
<svg style="left:1215px;top:136px" width="18" height="18" viewBox="0 0 18 18"><path d="M1 10.5 L5 6.5 L10.5 12 L6.5 16 Z" fill="#d98ae8"/><path d="M1 10.5 L10.5 1 L17 7.5 L6.5 16 Z M5 6.5 L10.5 12" fill="none" stroke="#b044c8" stroke-width="1.1"/></svg>
<svg style="left:1236px;top:143px" width="8" height="5" viewBox="0 0 8 5"><path d="M1 1 L4 4 L7 1" fill="none" stroke="#444" stroke-width="1.1"/></svg>
<svg style="left:1260px;top:87px" width="30" height="28" viewBox="0 0 30 28"><text x="0" y="11" font-size="12" font-family="Liberation Sans" fill="#2b7cd3">A</text><text x="0" y="26" font-size="12" font-family="Liberation Sans" fill="#444">Z</text><path d="M12 8 H29 L22 16 V25 L19 23 V16 Z" fill="none" stroke="#444" stroke-width="1.1"/></svg>
<div class="t" style="left:1258px;top:122px;font-size:12px">Sort &amp;</div>
<div class="t" style="left:1256px;top:138px;font-size:12px">Filter</div>
<svg style="left:1286px;top:142px" width="8" height="5" viewBox="0 0 8 5"><path d="M1 1 L4 4 L7 1" fill="none" stroke="#444" stroke-width="1.1"/></svg>
<svg style="left:1306px;top:86px" width="30" height="30" viewBox="0 0 30 30"><circle cx="18" cy="11" r="10" fill="none" stroke="#444" stroke-width="1.2"/><path d="M11 18 L1 29" stroke="#444" stroke-width="1.2"/></svg>
<div class="t" style="left:1303px;top:122px;font-size:12px">Find &amp;</div>
<div class="t" style="left:1300px;top:138px;font-size:12px">Select</div>
<svg style="left:1334px;top:142px" width="8" height="5" viewBox="0 0 8 5"><path d="M1 1 L4 4 L7 1" fill="none" stroke="#444" stroke-width="1.1"/></svg>
<svg style="left:1366px;top:84px" width="35" height="34" viewBox="1559 248 35 34"><rect x="1560.5" y="249.5" width="31" height="31" fill="#fff" stroke="#333" stroke-width="1.1"/><rect x="1561" y="250" width="30" height="3.5" fill="#9a9a9a"/><path d="M1561 258 H1591 M1561 266 H1591 M1561 274 H1591 M1568 254 V280 M1584 254 V280" stroke="#cfcfcf" stroke-width="1"/><circle cx="1575" cy="262.5" r="9" fill="#fff" stroke="#333" stroke-width="1.2"/><path d="M1581.5 269 L1592 280" stroke="#333" stroke-width="1.2"/><rect x="1570" y="262" width="3" height="5" fill="#aaa"/><rect x="1573.5" y="257" width="3" height="10" fill="#888"/><rect x="1577" y="259" width="3" height="8" fill="#3b8ad8"/></svg>
<div class="t" style="left:1363px;top:122px;font-size:12px">Analyze</div>
<div class="t" style="left:1373px;top:138px;font-size:12px">Data</div>
<svg style="left:1456px;top:160px" width="11" height="8" viewBox="0 0 11 8"><path d="M1 1.5 L5.5 6 L10 1.5" fill="none" stroke="#333" stroke-width="1.3"/></svg>
<!-- formula bar -->
<div class="a" style="left:8px;top:186px;width:100px;height:25px;background:#fff;border:1px solid #e0dfe3;border-radius:4px"></div>
<div class="t f13" style="left:15px;top:192px">D1</div>
<svg style="left:92px;top:195px" width="10" height="7" viewBox="0 0 10 7"><path d="M1 1 L5 5 L9 1" fill="none" stroke="#333" stroke-width="1.4"/></svg>
<div class="a" style="left:118px;top:191px;width:3px;height:3px;border-radius:50%;background:#333;box-shadow:0 5px 0 #333,0 10px 0 #333"></div>
<div class="a" style="left:129px;top:186px;width:74px;height:25px;background:#fff;border:1px solid #e0dfe3;border-radius:4px"></div>
<svg style="left:137px;top:193px" width="12" height="12" viewBox="0 0 12 12"><path d="M1 1 L11 11 M11 1 L1 11" stroke="#b8b8b8" stroke-width="1.1"/></svg>
<svg style="left:160px;top:193px" width="16" height="12" viewBox="0 0 16 12"><path d="M1 6 L5.5 10.5 L15 1" fill="none" stroke="#c4c4c4" stroke-width="1.1"/></svg>
<div class="t" style="left:183px;top:191px;font-family:'Liberation Serif';font-style:italic;font-size:16px;color:#333">fx</div>
<div class="a" style="left:208px;top:186px;width:1267px;height:25px;background:#fff;border:1px solid #e0dfe3;border-radius:4px"></div>
<div class="t f13" style="left:219px;top:192px">To</div>
<svg style="left:1460px;top:195px" width="10" height="7" viewBox="0 0 10 7"><path d="M1 1 L5 5 L9 1" fill="none" stroke="#333" stroke-width="1.4"/></svg>
<svg style="left:15px;top:223px" width="23" height="22" viewBox="0 0 23 22"><path d="M23 0 V22 H0 Z" fill="#dedde2"/></svg>
<div class="a" style="left:0;top:248px;width:41px;height:442px;background:#e8e8ea"></div>
<div class="a" style="left:41px;top:248px;width:1416px;height:442px;background:#fff"></div>
<div class="a" style="left:1457px;top:219px;width:26px;height:471px;background:#f5f4f7"></div>
<div class="a" style="left:429px;top:280px;width:317px;height:410px;background:#cfcecf"></div>
<div class="a" style="left:427px;top:219px;width:321px;height:30px;background:#a9d6bc"></div>
<div class="a" style="left:0;top:248px;width:1457px;height:1px;background:#c9c9cc"></div>
<div class="a" style="left:0;top:280px;width:41px;height:1px;background:#d2d2d4"></div>
<div class="a" style="left:41px;top:280px;width:386px;height:1px;background:#e1e1e1"></div>
<div class="a" style="left:428px;top:280px;width:319px;height:1px;background:#e1e1e1"></div>
<div class="a" style="left:747px;top:280px;width:710px;height:1px;background:#e1e1e1"></div>
<div class="a" style="left:0;top:312px;width:41px;height:1px;background:#d2d2d4"></div>
<div class="a" style="left:41px;top:312px;width:386px;height:1px;background:#e1e1e1"></div>
<div class="a" style="left:428px;top:312px;width:319px;height:1px;background:#c4c3c6"></div>
<div class="a" style="left:747px;top:312px;width:710px;height:1px;background:#e1e1e1"></div>
<div class="a" style="left:0;top:344px;width:41px;height:1px;background:#d2d2d4"></div>
<div class="a" style="left:41px;top:344px;width:386px;height:1px;background:#e1e1e1"></div>
<div class="a" style="left:428px;top:344px;width:319px;height:1px;background:#c4c3c6"></div>
<div class="a" style="left:747px;top:344px;width:710px;height:1px;background:#e1e1e1"></div>
<div class="a" style="left:0;top:376px;width:41px;height:1px;background:#d2d2d4"></div>
<div class="a" style="left:41px;top:376px;width:386px;height:1px;background:#e1e1e1"></div>
<div class="a" style="left:428px;top:376px;width:319px;height:1px;background:#c4c3c6"></div>
<div class="a" style="left:747px;top:376px;width:710px;height:1px;background:#e1e1e1"></div>
<div class="a" style="left:0;top:408px;width:41px;height:1px;background:#d2d2d4"></div>
<div class="a" style="left:41px;top:408px;width:386px;height:1px;background:#e1e1e1"></div>
<div class="a" style="left:428px;top:408px;width:319px;height:1px;background:#c4c3c6"></div>
<div class="a" style="left:747px;top:408px;width:710px;height:1px;background:#e1e1e1"></div>
<div class="a" style="left:0;top:440px;width:41px;height:1px;background:#d2d2d4"></div>
<div class="a" style="left:41px;top:440px;width:386px;height:1px;background:#e1e1e1"></div>
<div class="a" style="left:428px;top:440px;width:319px;height:1px;background:#c4c3c6"></div>
<div class="a" style="left:747px;top:440px;width:710px;height:1px;background:#e1e1e1"></div>
<div class="a" style="left:0;top:472px;width:41px;height:1px;background:#d2d2d4"></div>
<div class="a" style="left:41px;top:472px;width:386px;height:1px;background:#e1e1e1"></div>
<div class="a" style="left:428px;top:472px;width:319px;height:1px;background:#c4c3c6"></div>
<div class="a" style="left:747px;top:472px;width:710px;height:1px;background:#e1e1e1"></div>
<div class="a" style="left:0;top:504px;width:41px;height:1px;background:#d2d2d4"></div>
<div class="a" style="left:41px;top:504px;width:386px;height:1px;background:#e1e1e1"></div>
<div class="a" style="left:428px;top:504px;width:319px;height:1px;background:#c4c3c6"></div>
<div class="a" style="left:747px;top:504px;width:710px;height:1px;background:#e1e1e1"></div>
<div class="a" style="left:0;top:536px;width:41px;height:1px;background:#d2d2d4"></div>
<div class="a" style="left:41px;top:536px;width:386px;height:1px;background:#e1e1e1"></div>
<div class="a" style="left:428px;top:536px;width:319px;height:1px;background:#c4c3c6"></div>
<div class="a" style="left:747px;top:536px;width:710px;height:1px;background:#e1e1e1"></div>
<div class="a" style="left:0;top:568px;width:41px;height:1px;background:#d2d2d4"></div>
<div class="a" style="left:41px;top:568px;width:386px;height:1px;background:#e1e1e1"></div>
<div class="a" style="left:428px;top:568px;width:319px;height:1px;background:#c4c3c6"></div>
<div class="a" style="left:747px;top:568px;width:710px;height:1px;background:#e1e1e1"></div>
<div class="a" style="left:0;top:600px;width:41px;height:1px;background:#d2d2d4"></div>
<div class="a" style="left:41px;top:600px;width:386px;height:1px;background:#e1e1e1"></div>
<div class="a" style="left:428px;top:600px;width:319px;height:1px;background:#c4c3c6"></div>
<div class="a" style="left:747px;top:600px;width:710px;height:1px;background:#e1e1e1"></div>
<div class="a" style="left:0;top:632px;width:41px;height:1px;background:#d2d2d4"></div>
<div class="a" style="left:41px;top:632px;width:386px;height:1px;background:#e1e1e1"></div>
<div class="a" style="left:428px;top:632px;width:319px;height:1px;background:#c4c3c6"></div>
<div class="a" style="left:747px;top:632px;width:710px;height:1px;background:#e1e1e1"></div>
<div class="a" style="left:0;top:664px;width:41px;height:1px;background:#d2d2d4"></div>
<div class="a" style="left:41px;top:664px;width:386px;height:1px;background:#e1e1e1"></div>
<div class="a" style="left:428px;top:664px;width:319px;height:1px;background:#c4c3c6"></div>
<div class="a" style="left:747px;top:664px;width:710px;height:1px;background:#e1e1e1"></div>
<div class="a" style="left:143px;top:248px;width:1px;height:442px;background:#e1e1e1"></div>
<div class="a" style="left:143px;top:224px;width:1px;height:24px;background:#dcdbe0"></div>
<div class="a" style="left:285px;top:248px;width:1px;height:442px;background:#e1e1e1"></div>
<div class="a" style="left:285px;top:224px;width:1px;height:24px;background:#dcdbe0"></div>
<div class="a" style="left:1063px;top:248px;width:1px;height:442px;background:#e1e1e1"></div>
<div class="a" style="left:1063px;top:224px;width:1px;height:24px;background:#dcdbe0"></div>
<div class="a" style="left:1143px;top:248px;width:1px;height:442px;background:#e1e1e1"></div>
<div class="a" style="left:1143px;top:224px;width:1px;height:24px;background:#dcdbe0"></div>
<div class="a" style="left:1457px;top:248px;width:1px;height:442px;background:#e1e1e1"></div>
<div class="a" style="left:1457px;top:224px;width:1px;height:24px;background:#dcdbe0"></div>
<div class="a" style="left:41px;top:224px;width:1px;height:24px;background:#dcdbe0"></div>
<div class="a" style="left:39px;top:248px;width:2px;height:442px;background:#3b7a5a"></div>
<div class="a" style="left:427px;top:247px;width:322px;height:2px;background:#2d6b50"></div>
<div class="a" style="left:427px;top:247px;width:2px;height:443px;background:#2d6b50"></div>
<div class="a" style="left:747px;top:252px;width:2px;height:438px;background:#2a7656"></div>
<div class="a" style="left:745px;top:246px;width:6px;height:6px;background:#3a6e58"></div>
<div class="t" style="left:41px;width:102px;top:226px;font-size:20px;text-align:center;color:#444">A</div>
<div class="t" style="left:143px;width:142px;top:226px;font-size:20px;text-align:center;color:#444">B</div>
<div class="t" style="left:285px;width:142px;top:226px;font-size:20px;text-align:center;color:#444">C</div>
<div class="t" style="left:427px;width:320px;top:226px;font-size:20px;text-align:center;color:#3b7a55">D</div>
<div class="t" style="left:747px;width:316px;top:226px;font-size:20px;text-align:center;color:#444">E</div>
<div class="t" style="left:1063px;width:80px;top:226px;font-size:20px;text-align:center;color:#444">G</div>
<div class="t" style="left:1143px;width:314px;top:226px;font-size:20px;text-align:center;color:#444">M</div>
<div class="t" style="left:0;width:40px;top:254px;font-size:20px;text-align:center;color:#46535e">1</div>
<div class="t" style="left:0;width:40px;top:286px;font-size:20px;text-align:center;color:#46535e">2</div>
<div class="t" style="left:0;width:40px;top:318px;font-size:20px;text-align:center;color:#46535e">3</div>
<div class="t" style="left:0;width:40px;top:350px;font-size:20px;text-align:center;color:#46535e">4</div>
<div class="t" style="left:0;width:40px;top:382px;font-size:20px;text-align:center;color:#46535e">5</div>
<div class="t" style="left:0;width:40px;top:414px;font-size:20px;text-align:center;color:#46535e">6</div>
<div class="t" style="left:0;width:40px;top:446px;font-size:20px;text-align:center;color:#46535e">7</div>
<div class="t" style="left:0;width:40px;top:478px;font-size:20px;text-align:center;color:#46535e">8</div>
<div class="t" style="left:0;width:40px;top:510px;font-size:20px;text-align:center;color:#46535e">9</div>
<div class="t" style="left:0;width:40px;top:542px;font-size:20px;text-align:center;color:#46535e">10</div>
<div class="t" style="left:0;width:40px;top:574px;font-size:20px;text-align:center;color:#46535e">11</div>
<div class="t" style="left:0;width:40px;top:606px;font-size:20px;text-align:center;color:#46535e">12</div>
<div class="t" style="left:0;width:40px;top:638px;font-size:20px;text-align:center;color:#46535e">13</div>
<div class="t" style="left:0;width:40px;top:670px;font-size:20px;text-align:center;color:#46535e">14</div>
<div class="cell" style="left:45px;top:255px">Greeting</div>
<div class="cell" style="left:147px;top:255px">FirstName</div>
<div class="cell" style="left:289px;top:255px">LastName</div>
<div class="cell" style="left:431px;top:255px">To</div>
<div class="cell" style="left:751px;top:255px">Cc</div>
<div class="cell" style="left:1068px;top:255px">Flat</div>
<div class="cell" style="left:1146px;top:255px">Attachments</div>
<div class="cell" style="left:45px;top:287px">Mrs</div>
<div class="cell" style="left:147px;top:287px">Alex</div>
<div class="cell" style="left:289px;top:287px">Atkinson</div>
<div class="cell lnk" style="left:431px;top:287px">alex.atkinson@example.com</div>
<div class="cell lnk" style="left:751px;top:287px">sarah.atkinson@example.com</div>
<div class="cell" style="left:1068px;top:287px">14A</div>
<div class="cell" style="left:1146px;top:287px">Atkinson1.pdf;Atkinson2.pdf</div>
<div class="cell" style="left:45px;top:319px">Mr</div>
<div class="cell" style="left:147px;top:319px">Bob</div>
<div class="cell" style="left:289px;top:319px">Barker</div>
<div class="cell lnk" style="left:431px;top:319px">bob.barker@example.com</div>
<div class="cell" style="left:1068px;top:319px">33B</div>
<div class="cell" style="left:1146px;top:319px">Barker.pdf</div>
<div class="cell" style="left:45px;top:351px">Mr</div>
<div class="cell" style="left:147px;top:351px">Charlie</div>
<div class="cell" style="left:289px;top:351px">Chip</div>
<div class="cell lnk" style="left:431px;top:351px">charlie.chip@example.com</div>
<div class="cell" style="left:1068px;top:351px">34C</div>
<div class="cell" style="left:1146px;top:351px">Chip.pdf</div>
<div class="cell" style="left:45px;top:383px">Mrs</div>
<div class="cell" style="left:147px;top:383px">Delta</div>
<div class="cell" style="left:289px;top:383px">Dunstorp</div>
<div class="cell lnk" style="left:431px;top:383px">delta.dunstorp@example.com</div>
<div class="cell" style="left:1068px;top:383px">55A</div>
<div class="cell" style="left:1146px;top:383px">Dunstorp.pdf</div>
<svg style="left:1467px;top:224px" width="10" height="8" viewBox="0 0 10 8"><path d="M0 8 L5 1 L10 8 Z" fill="#777"/></svg>
<div class="a" style="left:1468px;top:235px;width:9px;height:304px;background:#7d7d7d;border-radius:5px"></div>
<svg style="left:627px;top:210px" width="38" height="38" viewBox="0 0 38 38"><path d="M14 4 H24 V14 H34 V24 H24 V34 H14 V24 H4 V14 H14 Z" fill="#000" stroke="#000" stroke-width="2.4"/><path d="M12 2 H22 V12 H32 V22 H22 V32 H12 V22 H2 V12 H12 Z" fill="#fff" stroke="#000" stroke-width="2.4"/></svg>
<div class="a" style="left:0;top:690px;width:1483px;height:1px;background:#e6e5ea"></div>
<svg style="left:26px;top:699px" width="8" height="13" viewBox="0 0 8 13"><path d="M6.5 1 L1.5 6.5 L6.5 12" fill="none" stroke="#a0a0a0" stroke-width="1.2"/></svg>
<svg style="left:59px;top:699px" width="8" height="13" viewBox="0 0 8 13"><path d="M1.5 1 L6.5 6.5 L1.5 12" fill="none" stroke="#a0a0a0" stroke-width="1.2"/></svg>
<div class="a" style="left:115px;top:690px;width:57px;height:28px;background:#fff;border-radius:0 0 5px 5px;box-shadow:0 1px 2px rgba(0,0,0,.12)"></div>
<div class="t" style="left:123px;top:697px;font-size:13px;color:#242424;-webkit-text-stroke:0.4px #242424">Sheet1</div>
<div class="a" style="left:123px;top:713px;width:42px;height:2px;background:#1e7145;border-radius:1px"></div>
<div class="a" style="left:176px;top:698px;width:1px;height:14px;background:#c8c8c8"></div>
<svg style="left:218px;top:699px" width="13" height="13" viewBox="0 0 13 13"><path d="M6.5 0 V13 M0 6.5 H13" stroke="#333" stroke-width="1.2"/></svg>
<div class="a" style="left:891px;top:701px;width:3px;height:3px;border-radius:50%;background:#444;box-shadow:0 5px 0 #444,0 10px 0 #444"></div>
<svg style="left:912px;top:701px" width="8" height="10" viewBox="0 0 8 10"><path d="M8 0 V10 L0 5 Z" fill="#777"/></svg>
<div class="a" style="left:925px;top:701px;width:484px;height:9px;background:#7b7b7b;border-radius:5px"></div>
<div class="t" style="left:7px;top:728px;font-size:11.5px">Ready</div>
<svg style="left:56px;top:725px" width="16" height="16" viewBox="0 0 16 16"><g fill="none" stroke="#333" stroke-width="1"><circle cx="6" cy="2.5" r="1.8"/><path d="M1 5 H11 M6 5 V9 L3 15 M6 9 L8 12"/><path d="M8.5 12 L10.5 14.5 L15 8"/></g></svg>
<div class="t" style="left:74px;top:728px;font-size:11.5px">Accessibility: Good to go</div>
<div class="t f12" style="left:1109px;top:728px">Count: 5</div>
<div class="a" style="left:1172px;top:723px;width:39px;height:21px;background:#e6e5ea;border-radius:3px"></div>
<svg style="left:1185px;top:727px" width="14" height="14" viewBox="0 0 14 14"><g fill="none" stroke="#333" stroke-width="1"><rect x=".5" y=".5" width="13" height="13"/><path d="M4.8 .5 V13.5 M9.2 .5 V13.5 M.5 4.8 H13.5 M.5 9.2 H13.5"/></g></svg>
<svg style="left:1225px;top:727px" width="15" height="14" viewBox="0 0 15 14"><g fill="none" stroke="#333" stroke-width="1"><rect x=".5" y=".5" width="14" height="13"/><rect x="3.5" y="3" width="8" height="8"/><path d="M5 5.5 H10 M5 7 H10 M5 8.5 H10"/></g></svg>
<svg style="left:1265px;top:727px" width="15" height="14" viewBox="0 0 15 14"><g fill="none" stroke="#333" stroke-width="1"><rect x=".5" y=".5" width="14" height="13"/><path d="M5 .5 V7.5 H10 V.5"/></g></svg>
<div class="a" style="left:1297px;top:733px;width:8px;height:1px;background:#333"></div>
<div class="a" style="left:1311px;top:733px;width:100px;height:1px;background:#777"></div>
<div class="a" style="left:1361px;top:730px;width:1px;height:7px;background:#777"></div>
<div class="a" style="left:1368px;top:726px;width:4px;height:14px;background:#555;border-radius:1px"></div>
<svg style="left:1416px;top:729px" width="9" height="9" viewBox="0 0 9 9"><path d="M4.5 0 V9 M0 4.5 H9" stroke="#333" stroke-width="1"/></svg>
</div>

<!-- ================= WEBCAM ================= -->
<div id="cam" class="a" style="left:1624px;top:812px;width:256px;height:236px;border-radius:14px;overflow:hidden;background:#d3d3d4">
<svg style="left:0;top:0" width="256" height="236" viewBox="0 0 256 236">
 <defs>
  <linearGradient id="bg" x1="0" y1="0" x2="1" y2="0"><stop offset="0" stop-color="#c2c2c4"/><stop offset=".3" stop-color="#d3d3d5"/><stop offset="1" stop-color="#e2e2e3"/></linearGradient>
  <radialGradient id="skin" cx=".5" cy=".3" r=".7"><stop offset="0" stop-color="#e0c9c0"/><stop offset=".55" stop-color="#dbb6a8"/><stop offset="1" stop-color="#c4968a"/></radialGradient>
  <linearGradient id="hair" x1="0" y1="0" x2="0" y2="1"><stop offset="0" stop-color="#c9ccd2"/><stop offset=".5" stop-color="#b2b5bb"/><stop offset="1" stop-color="#a0a3a9"/></linearGradient>
  <linearGradient id="neck" x1="0" y1="0" x2="0" y2="1"><stop offset="0" stop-color="#b48a7e"/><stop offset=".35" stop-color="#cfab9e"/><stop offset="1" stop-color="#cba395"/></linearGradient>
 </defs>
 <rect width="256" height="236" fill="url(#bg)"/>
 <path d="M88 160 Q92 190 92 203 L103 236 L153 236 L175 188 Q168 170 172 150 Z" fill="url(#neck)"/>
 <path d="M0 236 L13 236 Q30 218 55 210 Q75 205 92 203 L103 236 Z" fill="#3d3d3f"/>
 <path d="M153 236 L175 188 Q200 196 229 205 Q245 210 256 218 L256 236 Z" fill="#3d3d3f"/>
 <path d="M92 203 L103 236 L98 236 L87 205 Z M175 188 L153 236 L160 236 L180 190 Z" fill="#2c2c2e"/>
 <path d="M65 108 Q60 125 66 140 Q70 146 74 142 L74 110 Z" fill="#cfa092"/>
 <path d="M178 104 Q186 112 182 130 Q178 138 174 134 L174 106 Z" fill="#cfa092"/>
 <path d="M68 80 Q66 40 110 34 Q160 34 174 66 Q182 95 178 120 Q174 150 155 174 Q140 188 122 187 Q100 186 86 170 Q72 150 69 125 Z" fill="url(#skin)"/>
 <path d="M61 52 L64 40 L70 36 L72 26 L80 24 L84 14 L92 17 L98 6 L106 11 L112 2 L119 9 L126 3 L132 10 L140 6 L145 14 L153 13 L156 22 L164 24 L166 32 L173 38 L175 52 Q178 64 175 70 Q176 80 173 90 Q170 78 170 70 Q166 56 157 48 Q148 38 135 36 Q120 33 109 35 Q96 38 87 44 Q76 54 72 66 Q70 82 68 100 Q62 80 61 52 Z" fill="url(#hair)"/>
 <path d="M80 30 L92 22 M100 16 L108 12 M120 12 L128 8 M138 14 L146 16 M156 26 L164 30" stroke="#d8dade" stroke-width="2" opacity=".8"/>
 <path d="M82 82 Q98 74 114 80 M134 77 Q150 71 167 76" fill="none" stroke="#7e6458" stroke-width="3"/>
 <ellipse cx="97" cy="97" rx="11" ry="6" fill="#c9a092" opacity=".6"/>
 <ellipse cx="150" cy="93" rx="11" ry="6" fill="#c9a092" opacity=".6"/>
 <path d="M74 86 L116 84 Q118 96 114 105 Q96 109 80 107 Q74 98 74 86 Z M129 84 L172 80 Q174 92 170 101 Q150 105 134 103 Q129 94 129 84 Z M116 87 Q122 85 129 86" fill="none" stroke="#6b5550" stroke-width="1.8"/>
 <ellipse cx="98" cy="96" rx="6" ry="3" fill="#4f3a33"/>
 <ellipse cx="148" cy="92" rx="6" ry="3" fill="#4f3a33"/>
 <path d="M120 100 Q117 112 113 119 Q126 126 140 118 Q135 110 133 100" fill="#d2a797"/>
 <path d="M114 120 Q119 124 124 121 M131 121 Q136 124 141 119" fill="none" stroke="#6e4c42" stroke-width="2.2"/>
 <path d="M106 146 Q125 136 145 144 Q139 155 125 155 Q111 155 106 146 Z" fill="#7f5048"/>
 <path d="M110 146 Q125 141 141 145" fill="none" stroke="#e6d0c8" stroke-width="1.5"/>
 <path d="M90 168 Q122 195 160 168" fill="none" stroke="#b98a7c" stroke-width="3" opacity=".5"/>
</svg>
</div>

</body></html>
